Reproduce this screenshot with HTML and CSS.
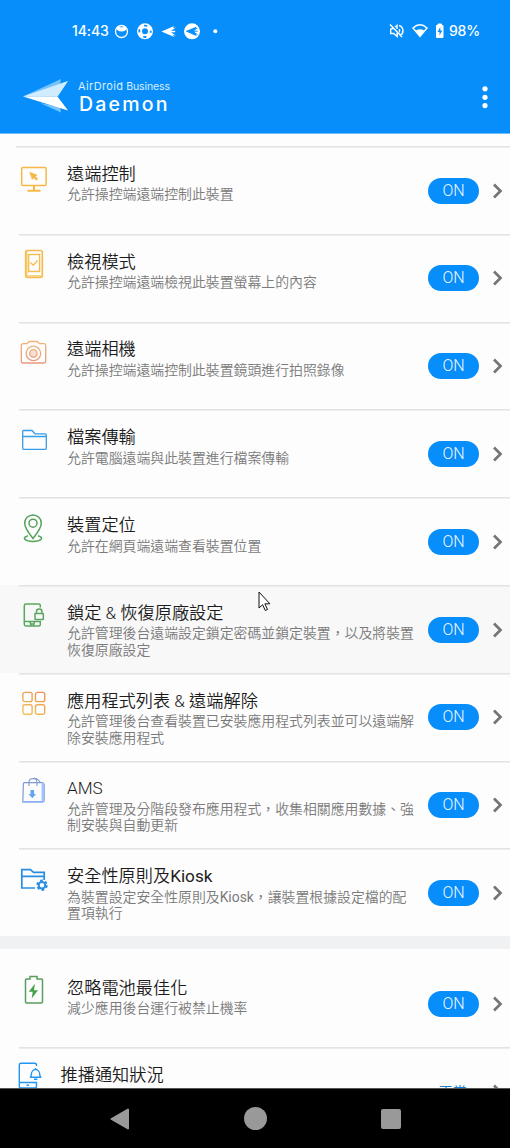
FILE: index.html
```html
<!DOCTYPE html>
<html lang="zh-Hant">
<head>
<meta charset="utf-8">
<title>AirDroid Business Daemon</title>
<link rel="stylesheet" href="styles.css">
</head>
<body>
<svg width="0" height="0" class="defs">
  <defs>
    <linearGradient id="peach" x1="0" y1="0" x2="0" y2="1"><stop offset="0" stop-color="#efb376"/><stop offset="1" stop-color="#ea9a7c"/></linearGradient>
    <linearGradient id="orange" gradientUnits="userSpaceOnUse" x1="12" y1="28" x2="24" y2="5"><stop offset="0" stop-color="#edc25c"/><stop offset="1" stop-color="#f29352"/></linearGradient>
    <symbol id="chevron" viewBox="0 0 12 18"><path d="M2 2.500 8.500 9 2 15.500" fill="none" stroke="#757575" stroke-width="2.700"/></symbol>
    <symbol id="plane" viewBox="0 0 16 12"><path d="M0 6 14 0 12.500 2.500 16 1.500 10.500 5.300H15V6.700H10.500L16 10.500 12.500 9.500 14 12Z"/></symbol>
  </defs>
</svg>
<div class="phone">
  <header class="header">
    <div class="status">
      <span class="clock">14:43</span>
      <svg class="notices" width="160" height="20" viewBox="0 0 160 20">
        <circle cx="13.500" cy="10.500" r="6" fill="none" stroke="#fff" stroke-width="1.300"/><path d="M9 6.500 10 5l2 1.300h3L17 5l1 1.500v2.500q-4.500 3-9 0Z" fill="#fff"/>
        <circle cx="37" cy="10.300" r="5.500" fill="none" stroke="#fff" stroke-width="5"/><circle cx="37" cy="10.300" r="5.700" fill="none" stroke="#078efa" stroke-width="1.800" stroke-dasharray="3.200 5.750" stroke-dashoffset="1.600"/>
        <use href="#plane" x="53" y="5" width="15.500" height="11" fill="#fff"/>
        <circle cx="84" cy="10.300" r="8" fill="#fff"/><use href="#plane" x="77.500" y="5.300" width="13" height="10" fill="#078efa"/>
        <circle cx="107.300" cy="10.300" r="2" fill="#fff"/>
      </svg>
      <svg class="system" width="60" height="20" viewBox="0 0 60 20" fill="none" stroke="#fff" stroke-width="1.400">
        <path d="M3 3.500 15 16M6 7.500 3.700 8v4.500h3l3.500 3v-5M8 6l2-1.500V8M12.500 8v3.500M12 4.500c5 1.500 5 8 1.500 9.500"/>
        <path d="M26 7q7-6.500 14 0l-7 8.500Z"/><path d="M28.800 9.500q4.200-2.500 8.400 0L33 15.200Z" fill="#fff" stroke="none"/>
        <path d="M49.500 4.500H51V3h3.500v1.500H56v12h-6.500Z" fill="#fff" stroke-width="1" stroke-linejoin="round"/><path d="m53.300 6-2.800 5h2v3.500l2.800-5h-2Z" fill="#078efa" stroke="none"/>
      </svg>
      <span class="percent">98%</span>
    </div>
    <div class="appbar">
      <svg class="logo" width="46" height="36" viewBox="0 0 46 36">
        <path d="M0 17.500 38 0 37 5 45 2 35 17Z" fill="#75c3fb"/><path d="M0 17.500 45 2 34.500 17.500Z" fill="#cfedff"/><path d="M17 24 38 33.500 37 28Z" fill="#75c3fb"/><path d="M0 17.500H34.500L45 31.500Z" fill="#fff"/>
      </svg>
      <div class="brand"><span class="brand-top"><span class="airdroid">AirDroid</span> Business</span><span class="brand-name">Daemon</span></div>
      <svg class="more" width="8" height="24" viewBox="0 0 8 24" fill="#fff"><circle cx="4" cy="3.800" r="2.600"/><circle cx="4" cy="12.300" r="2.600"/><circle cx="4" cy="20.600" r="2.600"/></svg>
    </div>
  </header>
  <main class="list">
    <section class="row first">
      <svg class="icon" viewBox="0 0 36 36" fill="none" stroke="#f5b945" stroke-width="1.500"><rect x="5.700" y="6.600" width="24.400" height="18" rx="1"/><path d="M18 25v4M11.500 29.700h13" stroke-width="2"/><path d="m13.700 11.300 7.400 2.700-1.800 1.400 2.300 2.600-1.200 1.200-2.600-2.400-1.500 1.700Z" fill="#f5b945" stroke="#f5b945" stroke-width=".6"/></svg>
      <div class="copy"><h2>遠端控制</h2><p>允許操控端遠端控制此裝置</p></div>
      <span class="toggle">ON</span><svg class="chevron"><use href="#chevron"/></svg>
    </section>
    <section class="row">
      <svg class="icon" viewBox="0 0 36 36" fill="none" stroke="#f5bd50"><path d="M10.800 3v25M11 27.700h14" stroke="#f8d486" stroke-width="1.500"/><rect x="9.700" y="2.500" width="16.600" height="26.800" rx="1.800" stroke-width="1.700"/><rect x="12.600" y="6.500" width="11" height="17" stroke-width="1.400"/><path d="m14.500 14.500 2.700 2.700 4.500-4.700" stroke-width="1.400"/></svg>
      <div class="copy"><h2>檢視模式</h2><p>允許操控端遠端檢視此裝置螢幕上的內容</p></div>
      <span class="toggle">ON</span><svg class="chevron"><use href="#chevron"/></svg>
    </section>
    <section class="row">
      <svg class="icon" viewBox="0 0 36 36" fill="none" stroke="url(#peach)" stroke-width="1.300"><path d="M7.500 7.700H11l2-2.200h8.500l2 2.200H28q1.700 0 1.700 1.700v15.900q0 1.700-1.700 1.700H7q-1.700 0-1.700-1.700V9.700q0-2 2.200-2Z"/><circle cx="17.400" cy="17.400" r="7.200"/><circle cx="17.400" cy="17.400" r="3.700" fill="#f9dfcd"/></svg>
      <div class="copy"><h2>遠端相機</h2><p>允許操控端遠端控制此裝置鏡頭進行拍照錄像</p></div>
      <span class="toggle">ON</span><svg class="chevron"><use href="#chevron"/></svg>
    </section>
    <section class="row">
      <svg class="icon" viewBox="0 0 36 36" fill="none" stroke="#369de8" stroke-width="1.300"><path d="M7 6.500h9l3 3.300h10.300q1 0 1 1v13.500q0 1-1 1H7.700q-1 0-1-1V6.500M6.700 12.500h23.600"/></svg>
      <div class="copy"><h2>檔案傳輸</h2><p>允許電腦遠端與此裝置進行檔案傳輸</p></div>
      <span class="toggle">ON</span><svg class="chevron"><use href="#chevron"/></svg>
    </section>
    <section class="row">
      <svg class="icon" viewBox="0 0 36 36" fill="none" stroke="#54a25a" stroke-width="1.500"><path d="M17 26.500Q8.700 16 8.700 11.200a8.300 8.300 0 0 1 16.600 0Q25.300 16 17 26.500Z"/><circle cx="17" cy="11.200" r="4"/><path d="M12 23.700c-7 2 -3 5.800 5 5.800s12-3.800 5-5.800"/></svg>
      <div class="copy"><h2>裝置定位</h2><p>允許在網頁端遠端查看裝置位置</p></div>
      <span class="toggle">ON</span><svg class="chevron"><use href="#chevron"/></svg>
    </section>
    <section class="row active">
      <svg class="icon" viewBox="0 0 36 36" fill="none" stroke="#5aa660" stroke-width="1.500"><path d="M24.300 8.500V6.500q0-1.500-1.500-1.500H10q-1.700 0-1.700 1.700v18.500q0 1.700 1.700 1.700h12.800q1.500 0 1.500-1.500v-3H8.300M14 25h4.500M14 22.500l1 4M18.500 22.500l-1 4"/><rect x="19" y="14.400" width="8.300" height="6" rx=".5"/><path d="M20.500 14v-1.500q0-2.500 2.700-2.500t2.700 2.500V14"/></svg>
      <div class="copy"><h2>鎖定 &amp; 恢復原廠設定</h2><p>允許管理後台遠端設定鎖定密碼並鎖定裝置，以及將裝置恢復原廠設定</p></div>
      <span class="toggle">ON</span><svg class="chevron"><use href="#chevron"/></svg>
    </section>
    <section class="row">
      <svg class="icon" viewBox="0 0 36 36" fill="none" stroke="url(#orange)" stroke-width="1.400"><rect x="6.900" y="5.400" width="9.200" height="9.200" rx="1.900"/><rect x="19.500" y="5.400" width="9.200" height="9.200" rx="1.900"/><rect x="6.900" y="17.700" width="9.200" height="9.500" rx="1.900"/><rect x="19.500" y="17.700" width="9.200" height="9.500" rx="1.900"/></svg>
      <div class="copy"><h2>應用程式列表 &amp; 遠端解除</h2><p>允許管理後台查看裝置已安裝應用程式列表並可以遠端解除安裝應用程式</p></div>
      <span class="toggle">ON</span><svg class="chevron"><use href="#chevron"/></svg>
    </section>
    <section class="row">
      <svg class="icon" viewBox="0 0 36 36" fill="none" stroke="#7e9bd3" stroke-width="1.200"><path d="M8.200 7.700h18.500l1.500 1.700v15.800q0 1.700-1.700 1.700H6.800L7.400 8.500Z"/><path d="M26.200 9v17.500l1.500 .2V9Z" fill="#aecbff" stroke="#9ebdff"/><path d="M13 11V7q0-3.500 4-3.500t4 4V11M16 3.800q5-2 8.300 3.700" stroke-width="1.100"/><path d="M7 26.800h20" stroke="#86adff"/><path d="M14.500 15h3.600v4h2l-3.800 4.200-3.800-4.200h2Z" fill="#62a8ee" stroke="none"/></svg>
      <div class="copy"><h2>AMS</h2><p>允許管理及分階段發布應用程式，收集相關應用數據、強制安裝與自動更新</p></div>
      <span class="toggle">ON</span><svg class="chevron"><use href="#chevron"/></svg>
    </section>
    <section class="row">
      <svg class="icon" viewBox="0 0 36 36" fill="none" stroke="#278ee3" stroke-width="1.700"><path d="M19 25H5.800V6.700h8.700l3 2.600h10.700V17M5.800 13.300h22.400"/><circle cx="26" cy="22.200" r="3.300" stroke-width="2"/><circle cx="26" cy="22.200" r="4.700" stroke-width="2" stroke-dasharray="2.700 2.222"/></svg>
      <div class="copy"><h2>安全性原則及<span class="latin">Kiosk</span></h2><p>為裝置設定安全性原則及<span class="latin">Kiosk</span>，讓裝置根據設定檔的配置項執行</p></div>
      <span class="toggle">ON</span><svg class="chevron"><use href="#chevron"/></svg>
    </section>
    <div class="band"></div>
    <section class="row plain">
      <svg class="icon" viewBox="0 0 36 36" fill="none" stroke="#589e5c" stroke-width="1.500"><path d="M10.700 5H14V2.600h7V5h4.500q1 0 1 1v22q0 1-1 1h-15q-1 0-1-1V6q0-1 1.200-1Z"/><path d="m19 9.700-6.300 8h4l-1 6.800 6.300-8.200h-4Z" fill="#47a14b" stroke="none"/></svg>
      <div class="copy"><h2>忽略電池最佳化</h2><p>減少應用後台運行被禁止機率</p></div>
      <span class="toggle">ON</span><svg class="chevron"><use href="#chevron"/></svg>
    </section>
    <section class="row push">
      <svg class="icon" viewBox="0 0 36 36" fill="none" stroke="#2196f3" stroke-width="1.400"><path d="M20.500 4V3q0-1.700-1.700-1.700H5Q3.300 1.300 3.300 3v21.300Q3.300 26 5 26h13.800q1.700 0 1.700-1.700V20.500H3.300M10.500 23.200h2.500"/><path d="M14 15.300q1.300-.5 1.300-2.500c0-7 8.500-7 8.500 0q0 2 1.500 2.500ZM18 17.200h3.300M19.600 7.500V6" /></svg>
      <div class="copy"><h2>推播通知狀況</h2></div>
      <span class="state">正常</span><svg class="chevron"><use href="#chevron"/></svg>
    </section>
  </main>
  <nav class="nav">
    <svg width="22" height="24" viewBox="0 0 22 24"><path d="M2.500 12 19 2.500V21.500Z" fill="#999" stroke="#999" stroke-width="2" stroke-linejoin="round"/></svg>
    <span class="home"></span><span class="recent"></span>
  </nav>
  <svg class="cursor" width="14" height="22" viewBox="0 0 14 22"><path d="M1 1v16l3.600-3.300 2.700 5.800 2.200-1-2.600-5.700h5Z" fill="#fff" stroke="#111" stroke-width="1"/></svg>
</div>
</body>
</html>
```
FILE: styles.css
```css
* { box-sizing: border-box; }
body { margin: 0; font-family: Roboto, "Noto Sans CJK TC", sans-serif; }
.defs { position: absolute; }
.phone { position: relative; display: flex; flex-direction: column; width: 510px; height: 1148px; overflow: hidden; background: #fdfdfd; }
.header { flex: none; height: 134px; background: #078efa; border-bottom: 1px solid #6fbdf8; color: #fff; }
.status { display: flex; align-items: center; height: 62px; padding-left: 72px; font-family: Inter, sans-serif; font-size: 14px; font-weight: 500; }
.clock { width: 36px; letter-spacing: -.1px; white-space: nowrap; }
.system { margin-left: 119px; }
.percent { margin-left: 2px; letter-spacing: -.2px; }
.clock, .percent { margin-top: -1px; }
.appbar { display: flex; align-items: center; height: 70px; padding: 0 21px 0 23px; }
.brand { display: flex; flex-direction: column; width: 110px; margin: -1px 0 0 9px; font-family: Inter, sans-serif; }
.brand-top { font-size: 10.5px; line-height: 14px; white-space: nowrap; color: #d9efff; letter-spacing: -.1px; }
.airdroid { font-size: 11px; letter-spacing: .35px; }
.brand-name { margin-left: 1px; font-size: 19.5px; line-height: 20px; letter-spacing: 2.2px; font-weight: 450; }
.more { margin-left: auto; }
.list { flex: none; height: 954px; padding-top: 12px; overflow: hidden; }
.row { display: flex; height: 87.8px; padding-left: 16px; background: linear-gradient(#e3e3e3, #e3e3e3) 19px 0 / 100% 1.6px no-repeat; }
.row.first { background-position: 16px 0; }
.row.active { background-color: #f8f8f8; }
.row.plain { background: none; }
.icon { flex: none; width: 36px; height: 36px; margin-top: 14.5px; }
.copy { flex: none; width: 351px; margin: 15.9px 0 0 15px; }
h2 { margin: 0; font-size: 17.2px; line-height: 24px; font-weight: 350; color: #1c1c1c; white-space: nowrap; }
p { margin: .5px 0 0; font-size: 13.88px; line-height: 16.5px; font-weight: 350; color: #7a7a7a; }
.latin { font-weight: 400; }
.toggle { flex: none; width: 51px; height: 26px; margin: 31.7px 0 0 10px; border-radius: 13px; background: #078efa; color: #eef8ff; font-size: 16px; line-height: 26px; font-weight: 350; text-align: center; }
.chevron { flex: none; width: 12px; height: 18px; margin: 35.6px 0 0 13px; }
.band { height: 12.5px; margin-bottom: 11px; background: #f0f1f3; }
.push .copy { width: 358px; margin-left: 8.5px; }
.state { width: 50.5px; margin: 33.5px 0 0 10px; padding-left: 10px; font-size: 14.2px; line-height: 22px; color: #1d80d0; }
.nav { flex: none; display: flex; align-items: center; height: 60px; padding: 0 0 0 109px; background: #000; border-top: 1px solid #555; }
.home { width: 23px; height: 23px; margin-left: 113px; border-radius: 50%; background: #999; }
.recent { width: 20px; height: 20px; margin-left: 113.500px; border-radius: 2px; background: #999; }
.cursor { position: absolute; left: 258px; top: 591px; }
```
